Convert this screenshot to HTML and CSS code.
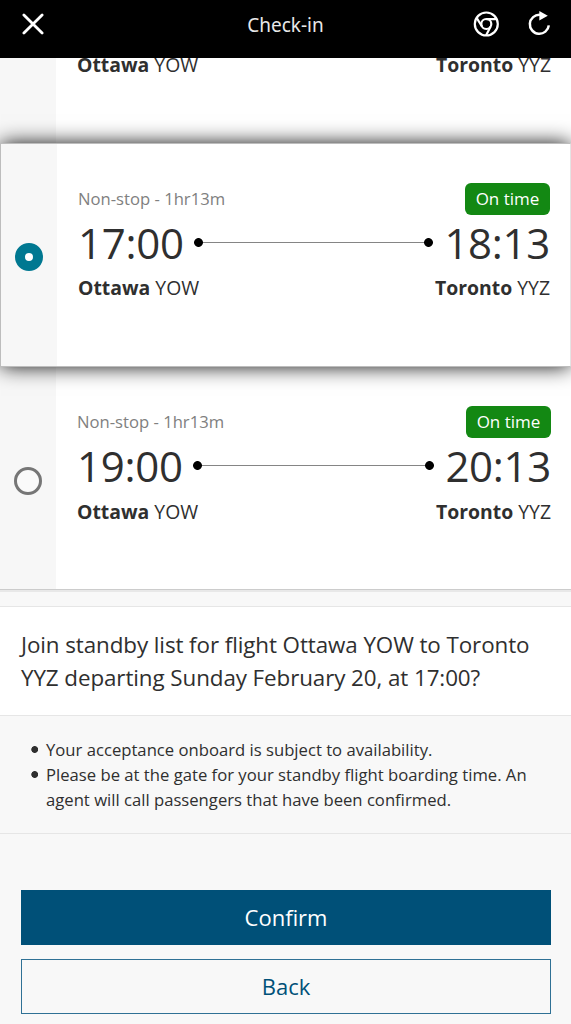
FILE: index.html
```html
<!DOCTYPE html>
<html lang="en">
<head>
<meta charset="utf-8">
<title>Check-in</title>
<link rel="stylesheet" href="styles.css">
</head>
<body>
<header class="topbar">
  <svg class="icon-close" width="22" height="22" viewBox="0 0 22 22"><path d="M1.9 1.9 20.1 20.1M20.1 1.9 1.9 20.1"/></svg>
  <h1 class="title">Check-in</h1>
  <svg class="icon-browser" width="28" height="28" viewBox="0 0 28 28"><circle cx="14.3" cy="14" r="11.5"/><circle cx="14.3" cy="14" r="5"/><path d="M14.3 9.1H24.6M10 16.5 4.8 8.2M18.6 16.5 14 25.4"/></svg>
  <svg class="icon-reload" width="26" height="28" viewBox="0 0 26 28"><path d="M14 4.8A9.5 9.5 0 1 0 22.8 15.3"/><path class="arrow" d="M13.3.9V10.5L21.8 5.7Z"/></svg>
</header>
<main>
  <section class="flight flight-cut">
    <div class="pick"></div>
    <div class="details">
      <div class="cities"><span><b>Ottawa</b> YOW</span><span><b>Toronto</b> YYZ</span></div>
    </div>
  </section>
  <section class="flight flight-selected">
    <div class="pick"><span class="radio radio-on"></span></div>
    <div class="details">
      <div class="meta"><span class="stops">Non-stop - 1hr13m</span><span class="status">On time</span></div>
      <div class="times"><span>17:00</span><i class="route"></i><span>18:13</span></div>
      <div class="cities"><span><b>Ottawa</b> YOW</span><span><b>Toronto</b> YYZ</span></div>
    </div>
  </section>
  <section class="flight flight-last">
    <div class="pick"><span class="radio"></span></div>
    <div class="details">
      <div class="meta"><span class="stops">Non-stop - 1hr13m</span><span class="status">On time</span></div>
      <div class="times"><span>19:00</span><i class="route"></i><span>20:13</span></div>
      <div class="cities"><span><b>Ottawa</b> YOW</span><span><b>Toronto</b> YYZ</span></div>
    </div>
  </section>
  <p class="question">Join standby list for flight Ottawa YOW to Toronto<br>YYZ departing Sunday February 20, at 17:00?</p>
  <ul class="notes">
    <li>Your acceptance onboard is subject to availability.</li>
    <li>Please be at the gate for your standby flight boarding time. An<br>agent will call passengers that have been confirmed.</li>
  </ul>
  <div class="actions">
    <button class="btn btn-primary">Confirm</button>
    <button class="btn btn-outline">Back</button>
  </div>
</main>
</body>
</html>
```

FILE: styles.css
```css
* { box-sizing: border-box; }
body {
  margin: 0;
  height: 1024px;
  overflow: hidden;
  background: #f8f8f8;
  color: #2f2f2f;
  font-family: "Open Sans", "Noto Sans", sans-serif;
}
.topbar {
  display: grid;
  grid-template-columns: 22px 1fr 28px 26px;
  column-gap: 26px;
  align-items: center;
  height: 58px;
  padding: 0 19px 10px 22px;
  background: #000;
}
.topbar svg { fill: none; stroke: #fff; stroke-width: 2.5; }
.topbar .icon-close { stroke-width: 2.8; stroke-linecap: round; }
.topbar .icon-browser { stroke-width: 2.2; }
.topbar .arrow { fill: #fff; stroke: none; }
.title {
  margin: 0;
  padding: 1px 0 0 55px;
  text-align: center;
  color: #e8e8e8;
  font: 400 19px/28px "Noto Sans", sans-serif;
}
.flight { display: flex; height: 223px; background: #fff; }
.pick {
  display: flex;
  align-items: center;
  justify-content: center;
  width: 56px;
  padding-top: 5px;
  background: #f7f7f7;
}
.radio { width: 28px; height: 28px; border: 3px solid #767676; border-radius: 50%; background: #fafafa; }
.radio-on { border: 10px solid #007891; background: #fff; }
.details { flex: 1; padding: 39px 20px 0 21px; }
.flight-cut { height: 85px; }
.flight-cut .details {
  display: flex;
  flex-direction: column;
  justify-content: flex-end;
  overflow: hidden;
  padding-top: 0;
  padding-bottom: 63px;
}
.flight-selected {
  position: relative;
  height: 224px;
  border: 1px solid #bdbdbd;
  border-right-color: #e4e4e4;
  box-shadow: 0 0 20px -1px #000;
  clip-path: inset(-30px 0);
}
.flight-selected .pick { padding-top: 4px; }
.flight-last { border-bottom: 1px solid #ccc; box-shadow: 0 2px #e8e8e8; }
.meta { display: flex; align-items: center; justify-content: space-between; height: 32px; }
.stops { padding-bottom: 2px; color: #808080; font-size: 16.65px; }
.flight-last .stops { padding-bottom: 1px; }
.status {
  width: 85px;
  border-radius: 6px;
  background: #138813;
  color: #fff;
  font-size: 17px;
  line-height: 32px;
  text-align: center;
}
.times { display: flex; align-items: center; height: 58px; font-size: 42px; line-height: 56px; letter-spacing: -.3px; }
.times span { padding-bottom: 2px; }
.route {
  flex: 1;
  height: 9px;
  margin: 0 11px 3px 10px;
  background:
    radial-gradient(circle at 4.5px 4.5px, #000 4px, transparent 4.8px),
    radial-gradient(circle at calc(100% - 4.5px) 4.5px, #000 4px, transparent 4.8px),
    linear-gradient(#858585, #858585) 4px 4px / calc(100% - 8px) 1px no-repeat;
}
.cities { display: flex; justify-content: space-between; height: 30px; font-size: 19.4px; line-height: 30px; white-space: nowrap; }
.flight-last .times { height: 59px; padding-bottom: 1px; }
.question {
  margin: 16px 0 0;
  padding: 21px 20px 21px 21px;
  border-top: 1px solid #e6e6e6;
  border-bottom: 1px solid #e6e6e6;
  background: #fff;
  font-size: 22.4px;
  line-height: 33px;
  letter-spacing: -.09px;
  white-space: nowrap;
}
.notes {
  margin: 0;
  padding: 21px 20px 21px 46px;
  border-bottom: 1px solid #e6e6e6;
  list-style: none;
  font-size: 16.67px;
  line-height: 25px;
  white-space: nowrap;
}
.notes li {
  margin-left: -15px;
  padding-left: 15px;
  background: radial-gradient(circle at 3.7px 12.5px, #2f2f2f 3px, transparent 3.8px);
}
.actions { display: grid; gap: 14px; padding: 56px 20px 0 21px; }
.btn { height: 55px; padding: 0; border: 1px solid #005078; font: 400 22px/53px "Open Sans", sans-serif; }
.btn-primary { background: #005078; color: #fff; }
.btn-outline { border-color: #2f7195; background: #f8f8f8; color: #005078; }
```
